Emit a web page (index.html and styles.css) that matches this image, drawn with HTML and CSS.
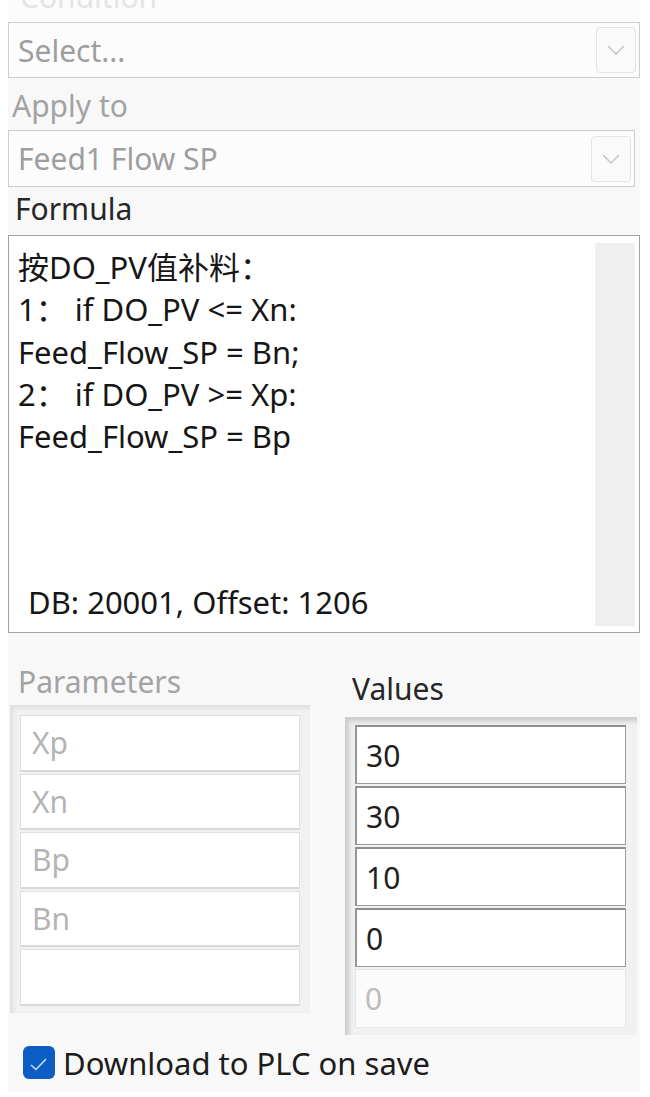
FILE: index.html
```html
<!DOCTYPE html>
<html lang="zh-CN">
<head>
  <meta charset="UTF-8" />
  <meta name="viewport" content="width=device-width, initial-scale=1.0"/>
  <title>Formula Editor</title>
  <link rel="stylesheet" href="styles.css">
</head>
<body>
  <div class="panel">
    <div class="cut-label"><span>Condition</span></div>

    <div class="select select-first">
      <span class="select-text">Select...</span>
      <span class="drop-btn">
        <svg width="18" height="10" viewBox="0 0 18 10"><polyline points="1,1 9,9 17,1" fill="none" stroke="#c2c2c2" stroke-width="1.4"/></svg>
      </span>
    </div>

    <div class="label muted">Apply to</div>
    <div class="select select-second">
      <span class="select-text">Feed1 Flow SP</span>
      <span class="drop-btn">
        <svg width="18" height="10" viewBox="0 0 18 10"><polyline points="1,1 9,9 17,1" fill="none" stroke="#c2c2c2" stroke-width="1.4"/></svg>
      </span>
    </div>

    <div class="label label-formula">Formula</div>
    <div class="formula">
      <div class="formula-body">
        <div class="formula-text">
          <div class="line">按DO_PV值补料：</div>
          <div class="line">1：&nbsp;if DO_PV &lt;= Xn:</div>
          <div class="line">Feed_Flow_SP = Bn;</div>
          <div class="line">2：&nbsp;if DO_PV &gt;= Xp:</div>
          <div class="line">Feed_Flow_SP = Bp</div>
        </div>
        <div class="db-info">DB: 20001, Offset: 1206</div>
      </div>
      <div class="scroll-track"></div>
    </div>

    <div class="params-area">
      <div class="param-col">
        <div class="label muted col-label">Parameters</div>
        <div class="group param-group">
          <div class="cell param-cell">Xp</div>
          <div class="cell param-cell">Xn</div>
          <div class="cell param-cell">Bp</div>
          <div class="cell param-cell">Bn</div>
          <div class="cell param-cell"></div>
        </div>
      </div>
      <div class="value-col">
        <div class="label col-label">Values</div>
        <div class="group value-group">
          <div class="cell value-cell">30</div>
          <div class="cell value-cell">30</div>
          <div class="cell value-cell">10</div>
          <div class="cell value-cell">0</div>
          <div class="cell value-cell disabled">0</div>
        </div>
      </div>
    </div>

    <label class="check-row">
      <span class="check-box">
        <svg width="32" height="33" viewBox="0 0 32 33">
          <rect x="0" y="0" width="32" height="33" rx="6" fill="#0d5ec4"/>
          <polyline points="8,19 13,23.5 23,13" fill="none" stroke="#c9dcf4" stroke-width="1.6"/>
        </svg>
      </span>
      <span class="check-text">Download to PLC on save</span>
    </label>
  </div>
</body>
</html>
```

FILE: styles.css
```css
/************************************************************************
 *  GLOBAL
 ************************************************************************/
* {
  margin: 0;
  padding: 0;
  box-sizing: border-box;
}
html, body {
  background: #ffffff;
  font-family: "Noto Sans", "Noto Sans CJK SC", sans-serif;
  color: #1c1c1c;
}
body {
  width: 650px;
  height: 1097px;
  overflow: hidden;
}

/************************************************************************
 *  PANEL
 ************************************************************************/
.panel {
  margin-left: 8px;
  width: 632px;
  background: #f8f8f8;
  padding-bottom: 4px;
}
.cut-label {
  height: 22px;
  overflow: hidden;
  background: #fcfcfc;
}
.cut-label span {
  display: block;
  margin-top: -23px;
  margin-left: 12px;
  font-size: 30px;
  line-height: 40px;
  color: #e4e4e4;
}
.label {
  font-size: 30px;
  line-height: 36px;
  color: #262626;
  padding-left: 4px;
}
.muted {
  color: #a3a3a3;
}

/************************************************************************
 *  SELECTS
 ************************************************************************/
.select {
  display: flex;
  align-items: center;
  justify-content: space-between;
  background: #fcfcfc;
  border: 1px solid #cdcdcd;
  padding: 0 3px 0 9px;
}
.select-first {
  height: 56px;
  width: 632px;
  margin-bottom: 10px;
}
.select-second {
  height: 57px;
  width: 627px;
  margin-top: 6px;
  margin-bottom: 4px;
}
.select-text {
  font-size: 30px;
  color: #9e9e9e;
}
.drop-btn {
  display: flex;
  align-items: center;
  justify-content: center;
  width: 40px;
  height: 46px;
  border: 1px solid #e4e4e4;
  border-radius: 4px;
  background: #fafafa;
}
.label-formula {
  padding-left: 7px;
  margin-bottom: 8px;
}

/************************************************************************
 *  FORMULA BOX
 ************************************************************************/
.formula {
  display: flex;
  height: 398px;
  background: #ffffff;
  border: 1px solid #a2a2a2;
}
.formula-body {
  flex: 1;
  display: flex;
  flex-direction: column;
  justify-content: space-between;
  padding: 10px 0 9px 9px;
}
.formula-text .line {
  font-size: 31px;
  line-height: 42.3px;
  color: #161616;
  white-space: pre;
}
.db-info {
  font-size: 31px;
  line-height: 42px;
  padding-left: 10px;
  color: #161616;
}
.scroll-track {
  width: 40px;
  margin: 7px 4px 6px 0;
  background: #efefef;
}

/************************************************************************
 *  PARAMETERS / VALUES
 ************************************************************************/
.params-area {
  display: grid;
  grid-template-columns: 300px 292px;
  column-gap: 35px;
  padding-left: 2px;
}
.param-col {
  padding-top: 31px;
}
.param-col .col-label {
  padding-left: 8px;
  margin-bottom: 5px;
}
.value-col {
  padding-top: 38px;
}
.value-col .col-label {
  padding-left: 7px;
  margin-bottom: 10px;
}
.group {
  display: flex;
  flex-direction: column;
  background: #f1f1f1;
}
.param-group {
  gap: 2px;
  padding: 10px 10px 7px 10px;
  box-shadow: inset 3px 3px 5px rgba(0,0,0,0.08);
}
.value-group {
  gap: 2px;
  padding: 8px 11px 7px 10px;
  box-shadow: inset 4px 4px 5px rgba(0,0,0,0.16);
}
.cell {
  display: flex;
  align-items: center;
  background: #ffffff;
  font-size: 30px;
}
.param-cell {
  height: 56.5px;
  border: 1px solid #e0e0e0;
  border-bottom: 2px solid #d8d8d8;
  padding-left: 11px;
  color: #b4b4b4;
}
.value-cell {
  height: 59px;
  border: 1px solid #9c9c9c;
  border-top: 2px solid #8e8e8e;
  border-left: 2px solid #969696;
  padding-left: 9px;
  color: #1f1f1f;
}
.value-cell.disabled {
  border: 1px solid #e6e6e6;
  background: #fbfbfb;
  color: #bdbdbd;
}

/************************************************************************
 *  CHECKBOX
 ************************************************************************/
.check-row {
  display: flex;
  align-items: center;
  gap: 8px;
  height: 53px;
  padding-left: 15px;
  padding-top: 2px;
}
.check-box {
  display: flex;
  flex: none;
  width: 32px;
  height: 33px;
}
.check-text {
  font-size: 31px;
  color: #1c1c1c;
}
```
